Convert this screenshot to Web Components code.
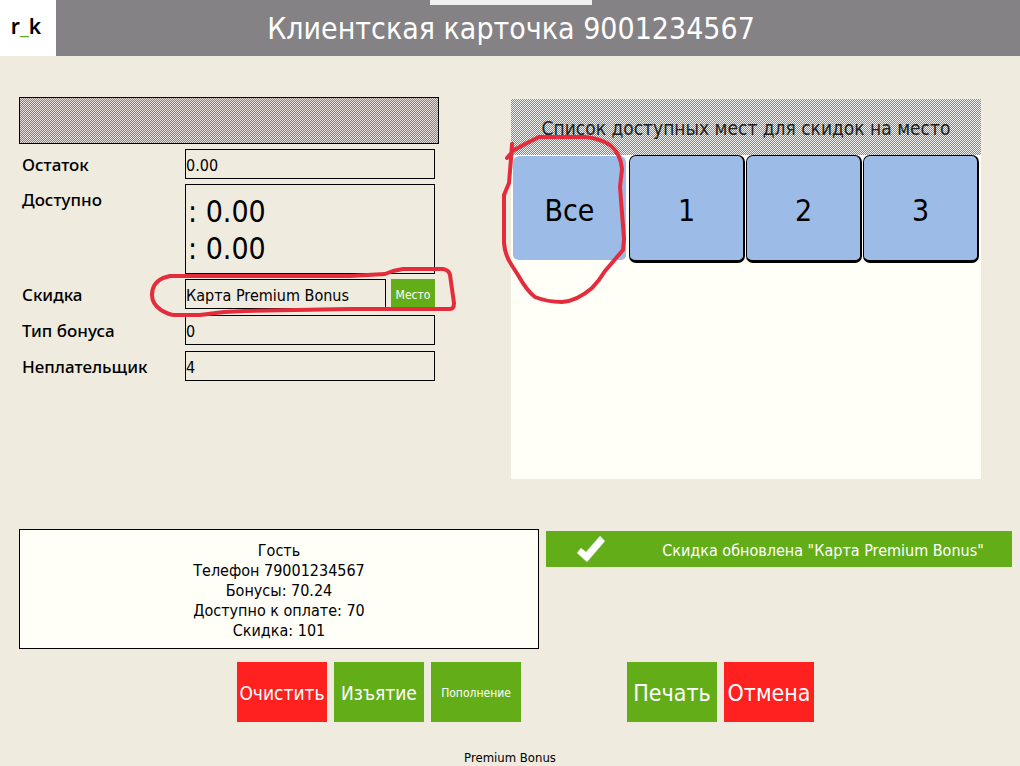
<!DOCTYPE html>
<html lang="ru">
<head>
<meta charset="utf-8">
<title>Клиентская карточка</title>
<style>
  body {
    margin: 0;
    min-height: 100vh;
    background: #efebdf;
    color: #000;
    font-family: "DejaVu Sans Condensed", "DejaVu Sans", "Noto Sans", sans-serif;
    font-size: 16px;
    --green: #63ae18;
    --red: #ff2020;
    --paper: #fffff7;
    --mark: #e42c3c;
  }
</style>
</head>
<body>
<card-app></card-app>
<script>
const define = (name, html) => {
  const template = document.createElement('template');
  template.innerHTML = html;
  customElements.define(name, class extends HTMLElement {
    constructor() {
      super();
      this.attachShadow({ mode: 'open' }).append(template.content.cloneNode(true));
    }
  });
};

define('card-header', `
<style>
  :host { display: grid; grid-template-columns: 56px 1fr 54px; align-items: center; height: 56px; background: #848284; position: relative; }
  .logo { box-sizing: border-box; height: 56px; padding: 14px 4px 0 0; background: #fff; font: 600 21px/24px "Noto Sans", sans-serif; text-align: center; }
  .logo i { font-style: normal; color: var(--green); }
  h1 { margin: 0; padding-top: 2px; text-align: center; color: #fff; font-weight: 400; font-size: 30px; line-height: 40px; }
  .tab { position: absolute; top: 0; left: 50%; margin-left: -80px; width: 162px; height: 5px; background: #f0f0f0; }
</style>
<div class="logo">r<i>_</i>k</div>
<h1><slot></slot></h1>
<div class="tab"></div>`);

class CardField extends HTMLElement {
  connectedCallback() {
    const label = this.getAttribute('label');
    const value = this.getAttribute('value');
    const big = this.hasAttribute('multiline');
    this.attachShadow({ mode: 'open' }).innerHTML = `
<style>
  :host { display: grid; grid-template-columns: 163px minmax(0, 1fr); align-items: start; min-height: var(--row, 30px); }
  label { height: 30px; font: 500 17px/32px "Noto Sans", sans-serif; }
  .value { display: flex; gap: 5px; }
  input, textarea { box-sizing: border-box; flex: 1; min-width: 0; height: 30px; margin: 0; padding: 2px 0 0; border: 1px solid #000; border-radius: 0; background: none; color: inherit; font: inherit; outline: 0; }
  textarea { height: 90px; padding: 8px 2px; resize: none; overflow: hidden; font-size: 30px; line-height: 37px; }
</style>
<label for="v">${label}</label>
<div class="value">${big
  ? `<textarea id="v" readonly>${value}</textarea>`
  : `<input id="v" readonly value="${value}">`}<slot></slot></div>`;
  }
}
customElements.define('card-field', CardField);

define('card-button', `
<style>
  :host { display: block; width: 90px; height: 60px; font-size: 19px; --fill: var(--green); }
  :host([kind="danger"]) { --fill: var(--red); }
  :host([size="small"]) { font-size: 12px; }
  :host([size="large"]) { font-size: 23px; }
  :host([size="inline"]) { width: 44px; height: 30px; font-size: 12px; }
  button { width: 100%; height: 100%; padding: 2px 0 0; border: 0; background: var(--fill); color: #fff; font: inherit; white-space: nowrap; display: flex; align-items: center; justify-content: center; }
</style>
<button type="button"><slot></slot></button>`);

define('card-details', `
<style>
  :host { display: block; position: relative; }
  .band { height: 45px; margin-bottom: 5px; border: 1px solid #000; background: repeating-conic-gradient(#847c7a 0 25%, #ebe3df 0 50%) 0 0 / 2px 2px; }
  form { display: flex; flex-direction: column; gap: 5px; padding: 0 4px 0 3px; }
  .tall { --row: 31px; }
  svg { position: absolute; left: 0; top: 0; overflow: visible; pointer-events: none; }
</style>
<div class="band"></div>
<form>
  <card-field label="Остаток" value="0.00"></card-field>
  <card-field label="Доступно" multiline value=": 0.00&#10;: 0.00"></card-field>
  <card-field class="tall" label="Скидка" value="Карта Premium Bonus"><card-button size="inline">Место</card-button></card-field>
  <card-field class="tall" label="Тип бонуса" value="0"></card-field>
  <card-field label="Неплательщик" value="4"></card-field>
</form>
<svg width="1" height="1" aria-hidden="true">
  <path d="M151 179H331L366 177L374 174L384 172H424Q430 173 431 178L435 206Q435 212 431 212H331L226 214L205 215L181 218H156Q150 218 142 213Q133 207 133 198Q133 186 144 181L151 179" fill="none" stroke="var(--mark)" stroke-width="4" stroke-linejoin="round" stroke-linecap="round"/>
</svg>`);

define('seat-tile', `
<style>
  :host { display: block; height: 108px; }
  button { box-sizing: border-box; width: 100%; height: 100%; padding: 4px 0 0; border: solid #000; border-width: 1px 2px 3px 1px; border-radius: 7px; background: #9cbce7; background-clip: padding-box; color: #000; font: inherit; font-size: 30px; }
  :host([selected]) button { border-color: var(--paper); }
</style>
<button type="button"><slot></slot></button>`);

define('seat-panel', `
<style>
  :host { display: flex; flex-direction: column; position: relative; height: 380px; margin-top: 2px; background: var(--paper); }
  h2 { margin: 0; font-size: 19px; font-weight: 400; line-height: 56px; padding-top: 1px; height: 55px; text-align: center; color: #222; background: repeating-conic-gradient(#848284 0 25%, #f4f4f2 0 50%) 0 0 / 2px 2px; white-space: nowrap; }
  .seats { display: grid; grid-template-columns: repeat(4, 1fr); gap: 1px; padding: 0 2px 0 1px; }
  svg { position: absolute; left: 0; top: 0; overflow: visible; pointer-events: none; }
</style>
<h2>Список доступных мест для скидок на место</h2>
<div class="seats">
  <seat-tile selected>Все</seat-tile><seat-tile>1</seat-tile><seat-tile>2</seat-tile><seat-tile>3</seat-tile>
</div>
<svg width="1" height="1" aria-hidden="true">
  <path d="M1 45L0 60L-2 84L-7 96V144Q-6 156 0 165L7 176Q16 192 24 198Q36 203 51 203Q66 202 81 189Q88 182 94 172L112 151L113 140L109 88L111 70Q110 55 99 46Q88 39 74 38H28L18 43L3 51L-4 59" fill="none" stroke="var(--mark)" stroke-width="4" stroke-linejoin="round" stroke-linecap="round"/>
</svg>`);

define('guest-info', `
<style>
  :host { display: block; box-sizing: border-box; min-height: 120px; padding: 11px 10px 7px; border: 1px solid #000; background: var(--paper); text-align: center; line-height: 20px; }
  p { margin: 0; }
</style>
<p>Гость</p><p>Телефон 79001234567</p><p>Бонусы: 70.24</p><p>Доступно к оплате: 70</p><p>Скидка: 101</p>`);

define('status-toast', `
<style>
  :host { display: grid; grid-template-columns: 88px 1fr; align-items: center; height: 36px; margin-top: 2px; background: var(--green); color: #fff; text-align: center; white-space: nowrap; }
  svg { display: block; margin: 0 auto; }
  span { padding-top: 2px; }
</style>
<svg width="30" height="28" viewBox="0 0 30 28" aria-hidden="true">
  <path d="M2 18L6 13L11 17L25 1L30 6L12 27Z" fill="#fff" stroke="#c4d6b4" stroke-width=".5"/>
</svg>
<span role="status"><slot></slot></span>`);

define('card-app', `
<style>
  :host { display: block; }
  main { display: grid; grid-template-columns: minmax(0, 42fr) minmax(0, 47fr); gap: 72px; padding: 41px 39px 0 19px; }
  .info { display: grid; grid-template-columns: minmax(0, 520fr) minmax(0, 466fr); align-items: start; gap: 7px; padding: 50px 8px 0 19px; }
  .actions { display: flex; justify-content: center; gap: 106px; padding: 13px 0 0 31px; }
  .group { display: flex; gap: 7px; }
  footer { padding-top: 28px; text-align: center; font-size: 13px; line-height: 16px; }
</style>
<card-header>Клиентская карточка 9001234567</card-header>
<main><card-details></card-details><seat-panel></seat-panel></main>
<section class="info"><guest-info></guest-info><status-toast>Скидка обновлена "Карта Premium Bonus"</status-toast></section>
<div class="actions">
  <div class="group"><card-button kind="danger">Очистить</card-button><card-button>Изъятие</card-button><card-button size="small">Пополнение</card-button></div>
  <div class="group"><card-button size="large">Печать</card-button><card-button size="large" kind="danger">Отмена</card-button></div>
</div>
<footer>Premium Bonus</footer>`);
</script>
</body>
</html>
